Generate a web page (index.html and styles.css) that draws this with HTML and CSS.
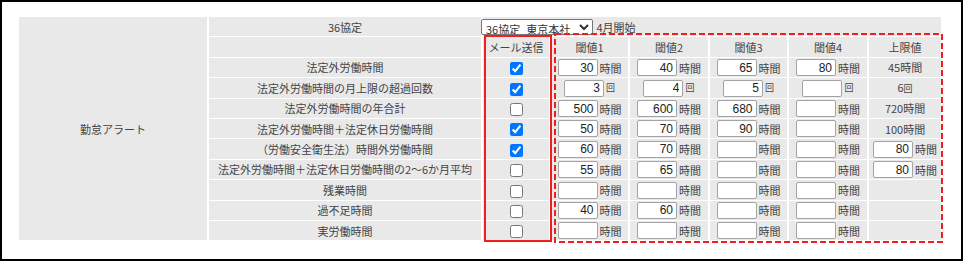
FILE: index.html
```html
<!DOCTYPE html>
<html lang="ja">
<head>
  <meta charset="UTF-8" />
  <title>勤怠アラート設定</title>
  <link rel="stylesheet" href="styles.css">
</head>
<body>
  <div class="frame">
    <table class="alert-table">
      <colgroup>
        <col class="c-group">
        <col class="c-label">
        <col class="c-mail">
        <col class="c-t1">
        <col class="c-t2">
        <col class="c-t3">
        <col class="c-t4">
        <col class="c-limit">
      </colgroup>
      <tr>
        <td class="group" rowspan="11">勤怠アラート</td>
        <td>36協定</td>
        <td class="agreement" colspan="6">
          <select class="agreement-select">
            <option>36協定_東京本社</option>
          </select>
          <span>4月開始</span>
        </td>
      </tr>
      <tr>
        <td></td>
        <td>メール送信</td>
        <td>閾値1</td>
        <td>閾値2</td>
        <td>閾値3</td>
        <td>閾値4</td>
        <td>上限値</td>
      </tr>
      <tr>
        <td>法定外労働時間</td>
        <td><input type="checkbox" checked></td>
        <td><span class="field"><input class="num" type="text" value="30"><span>時間</span></span></td>
        <td><span class="field"><input class="num" type="text" value="40"><span>時間</span></span></td>
        <td><span class="field"><input class="num" type="text" value="65"><span>時間</span></span></td>
        <td><span class="field"><input class="num" type="text" value="80"><span>時間</span></span></td>
        <td>45時間</td>
      </tr>
      <tr>
        <td>法定外労働時間の月上限の超過回数</td>
        <td><input type="checkbox" checked></td>
        <td><span class="field"><input class="num" type="text" value="3"><span class="unit-small">回</span></span></td>
        <td><span class="field"><input class="num" type="text" value="4"><span class="unit-small">回</span></span></td>
        <td><span class="field"><input class="num" type="text" value="5"><span class="unit-small">回</span></span></td>
        <td><span class="field"><input class="num" type="text" value=""><span class="unit-small">回</span></span></td>
        <td>6<span class="unit-small">回</span></td>
      </tr>
      <tr>
        <td>法定外労働時間の年合計</td>
        <td><input type="checkbox"></td>
        <td><span class="field"><input class="num" type="text" value="500"><span>時間</span></span></td>
        <td><span class="field"><input class="num" type="text" value="600"><span>時間</span></span></td>
        <td><span class="field"><input class="num" type="text" value="680"><span>時間</span></span></td>
        <td><span class="field"><input class="num" type="text" value=""><span>時間</span></span></td>
        <td>720時間</td>
      </tr>
      <tr>
        <td>法定外労働時間＋法定休日労働時間</td>
        <td><input type="checkbox" checked></td>
        <td><span class="field"><input class="num" type="text" value="50"><span>時間</span></span></td>
        <td><span class="field"><input class="num" type="text" value="70"><span>時間</span></span></td>
        <td><span class="field"><input class="num" type="text" value="90"><span>時間</span></span></td>
        <td><span class="field"><input class="num" type="text" value=""><span>時間</span></span></td>
        <td>100時間</td>
      </tr>
      <tr>
        <td>（労働安全衛生法）時間外労働時間</td>
        <td><input type="checkbox" checked></td>
        <td><span class="field"><input class="num" type="text" value="60"><span>時間</span></span></td>
        <td><span class="field"><input class="num" type="text" value="70"><span>時間</span></span></td>
        <td><span class="field"><input class="num" type="text" value=""><span>時間</span></span></td>
        <td><span class="field"><input class="num" type="text" value=""><span>時間</span></span></td>
        <td><span class="field"><input class="num" type="text" value="80"><span>時間</span></span></td>
      </tr>
      <tr>
        <td>法定外労働時間＋法定休日労働時間の2〜6か月平均</td>
        <td><input type="checkbox"></td>
        <td><span class="field"><input class="num" type="text" value="55"><span>時間</span></span></td>
        <td><span class="field"><input class="num" type="text" value="65"><span>時間</span></span></td>
        <td><span class="field"><input class="num" type="text" value=""><span>時間</span></span></td>
        <td><span class="field"><input class="num" type="text" value=""><span>時間</span></span></td>
        <td><span class="field"><input class="num" type="text" value="80"><span>時間</span></span></td>
      </tr>
      <tr>
        <td>残業時間</td>
        <td><input type="checkbox"></td>
        <td><span class="field"><input class="num" type="text" value=""><span>時間</span></span></td>
        <td><span class="field"><input class="num" type="text" value=""><span>時間</span></span></td>
        <td><span class="field"><input class="num" type="text" value=""><span>時間</span></span></td>
        <td><span class="field"><input class="num" type="text" value=""><span>時間</span></span></td>
        <td></td>
      </tr>
      <tr>
        <td>過不足時間</td>
        <td><input type="checkbox"></td>
        <td><span class="field"><input class="num" type="text" value="40"><span>時間</span></span></td>
        <td><span class="field"><input class="num" type="text" value="60"><span>時間</span></span></td>
        <td><span class="field"><input class="num" type="text" value=""><span>時間</span></span></td>
        <td><span class="field"><input class="num" type="text" value=""><span>時間</span></span></td>
        <td></td>
      </tr>
      <tr>
        <td>実労働時間</td>
        <td><input type="checkbox"></td>
        <td><span class="field"><input class="num" type="text" value=""><span>時間</span></span></td>
        <td><span class="field"><input class="num" type="text" value=""><span>時間</span></span></td>
        <td><span class="field"><input class="num" type="text" value=""><span>時間</span></span></td>
        <td><span class="field"><input class="num" type="text" value=""><span>時間</span></span></td>
        <td></td>
      </tr>
    </table>

    <!-- annotation marks -->
    <div class="mark-mail"></div>
    <svg class="mark-threshold" width="389" height="210" viewBox="0 0 389 210">
      <rect x="1" y="1" width="387" height="208" fill="none" stroke="#f01e1e" stroke-width="2" stroke-dasharray="6 3"/>
    </svg>
  </div>
</body>
</html>
```

FILE: styles.css
```css
body {
  margin: 0;
  background-color: #fff;
  font-family: "Noto Sans CJK JP", "Noto Sans", sans-serif;
  font-size: 11px;
  color: #444;
}
.frame {
  position: relative;
  box-sizing: border-box;
  width: 963px;
  height: 261px;
  border: 2px solid #000;
  padding: 14px 0 0 15px;
}
.alert-table {
  table-layout: fixed;
  width: 926px;
  border-collapse: separate;
  border-spacing: 2px 1px;
  background-color: #fff;
}
.c-group { width: 188px; }
.c-label { width: 272px; }
.c-mail { width: 66px; }
.c-t1 { width: 77px; }
.c-t2 { width: 78px; }
.c-t3 { width: 77px; }
.c-t4 { width: 78px; }
.c-limit { width: 72px; }
.alert-table td {
  height: 19.4px;
  padding: 0;
  background-color: #e9e9e9;
  text-align: center;
  vertical-align: middle;
  white-space: nowrap;
  line-height: 14px;
}
.alert-table td.agreement {
  text-align: left;
}
.agreement-select {
  box-sizing: border-box;
  width: 112px;
  height: 16px;
  margin: 0 0 0 -2px;
  padding: 0;
  font-family: inherit;
  font-size: 11px;
  color: #333;
  background-color: #fff;
  border: 1px solid #767676;
  border-radius: 2px;
  vertical-align: middle;
}
.agreement span {
  margin-left: 1px;
  vertical-align: middle;
}
input[type="checkbox"] {
  width: 13px;
  height: 13px;
  margin: 0;
  vertical-align: middle;
}
.field {
  display: inline-flex;
  align-items: center;
  gap: 2px;
  vertical-align: middle;
}
.num {
  box-sizing: border-box;
  width: 40px;
  height: 17px;
  padding: 0 3px 0 2px;
  border: 1px solid #a4a4a4;
  border-radius: 2px;
  background-color: #fff;
  font-family: "Liberation Sans", Arial, sans-serif;
  font-size: 12px;
  color: #222;
  text-align: right;
}
.unit-small {
  font-size: 9px;
}
.mark-mail {
  position: absolute;
  left: 482px;
  top: 33px;
  box-sizing: border-box;
  width: 68px;
  height: 207px;
  border: 2px solid #f01e1e;
}
.mark-threshold {
  position: absolute;
  left: 552px;
  top: 31px;
}
```
